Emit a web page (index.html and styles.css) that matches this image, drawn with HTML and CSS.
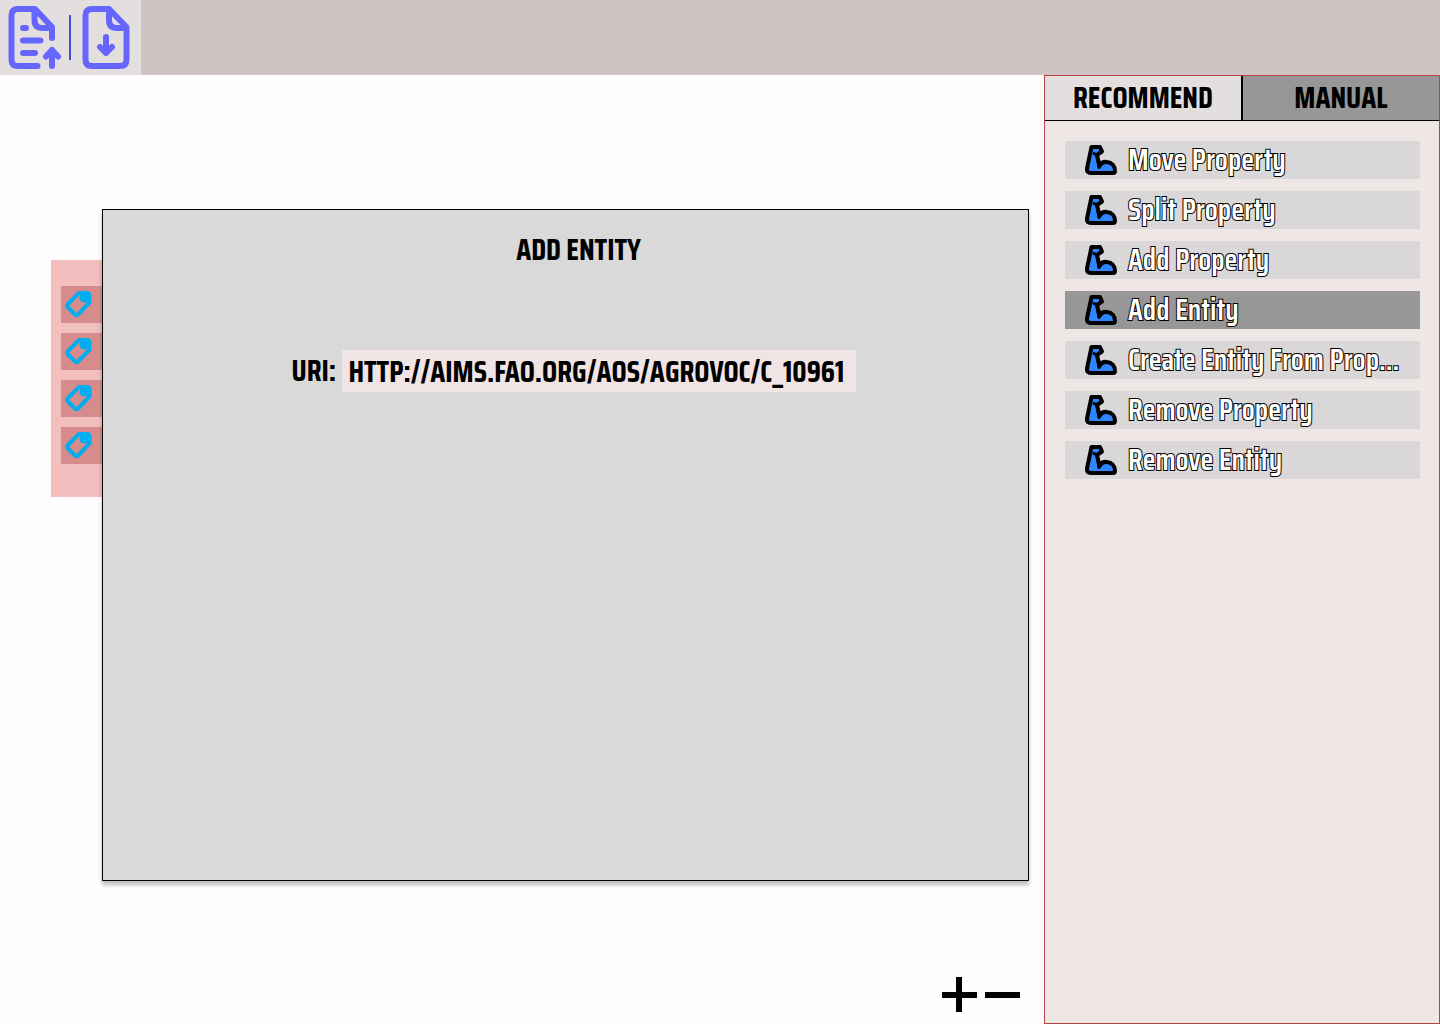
FILE: index.html
```html
<!DOCTYPE html>
<html lang="en">
<head>
<meta charset="utf-8">
<title>Entity editor</title>
<link rel="stylesheet" href="styles.css">
</head>
<body>
<svg class="sprite" aria-hidden="true">
  <symbol id="tag" viewBox="0 1 28 28">
    <path d="M15 3H22.500Q25.500 3 25.500 6V12.500L14 24.500Q12.500 26 11 24.500L4 17.500Q2.500 16 4 14Z" fill="none" stroke="#00aeef" stroke-width="4" stroke-linejoin="round"/>
    <circle cx="20" cy="8" r="4.500" fill="#00aeef"/>
  </symbol>
  <symbol id="arm" viewBox="0 0 32 30">
    <path d="M6.500 2H15L17 6.500L12 10L14.500 21C16 18 19 16.500 22 17C27 17.500 30 21 30 26Q30 28 28 28H6Q1.500 28 2 23.500Z" fill="#2e86ff" stroke="#000" stroke-width="4" stroke-linejoin="round"/>
    <path d="M9 8.500L12 10L14 22.500" fill="none" stroke="#000" stroke-width="3" stroke-linecap="round" stroke-linejoin="round"/>
  </symbol>
</svg>
<header class="topbar">
  <div class="toolbar">
    <button class="tool" aria-label="Upload document">
      <svg viewBox="4 0 60 75" class="tool-icon"><path d="M37.500 66H18Q11.500 66 11.500 59.500V15.500Q11.500 9 18 9H35L52 27V38M34.500 9V20Q34.500 28 42.500 28H52M23 28H26M23 40.500H40.500M23 53H35M52 66V50M46 56.500L52 50L58 56.500"/></svg>
    </button>
    <span class="divider"></span>
    <button class="tool" aria-label="Download document">
      <svg viewBox="76 0 60 75" class="tool-icon"><path d="M109 9H92Q85.500 9 85.500 15.500V59.500Q85.500 66 92 66H120Q126.500 66 126.500 59.500V27ZV20Q109 28 117 28H126.500M106 37V53M100 47L106 53L112 47"/></svg>
    </button>
  </div>
</header>
<div class="main">
  <main class="canvas">
    <div class="node">
      <div class="prop"><svg class="tag"><use href="#tag"/></svg></div>
      <div class="prop"><svg class="tag"><use href="#tag"/></svg></div>
      <div class="prop"><svg class="tag"><use href="#tag"/></svg></div>
      <div class="prop"><svg class="tag"><use href="#tag"/></svg></div>
    </div>
    <section class="dialog" role="dialog" aria-labelledby="dialog-title">
      <h1 class="dialog-title" id="dialog-title">ADD ENTITY</h1>
      <div class="field">
        <label class="field-label" for="uri">URI:</label>
        <input class="field-input" id="uri" type="text" value="HTTP://AIMS.FAO.ORG/AOS/AGROVOC/C_10961">
      </div>
    </section>
    <div class="zoom">
      <button class="zoom-button" aria-label="Zoom in"><svg class="zoom-icon" viewBox="0 0 35 35"><path d="M0 18H35M17 0V35"/></svg></button>
      <button class="zoom-button" aria-label="Zoom out"><svg class="zoom-icon" viewBox="0 0 35 35"><path d="M0 18H35"/></svg></button>
    </div>
  </main>
  <aside class="panel">
    <div class="tabs" role="tablist">
      <button class="tab" role="tab" aria-selected="true">RECOMMEND</button>
      <button class="tab tab-inactive" role="tab" aria-selected="false">MANUAL</button>
    </div>
    <div class="actions">
      <button class="action"><svg class="arm"><use href="#arm"/></svg><span class="action-name">Move Property</span></button>
      <button class="action"><svg class="arm"><use href="#arm"/></svg><span class="action-name">Split Property</span></button>
      <button class="action"><svg class="arm"><use href="#arm"/></svg><span class="action-name">Add Property</span></button>
      <button class="action action-selected"><svg class="arm"><use href="#arm"/></svg><span class="action-name">Add Entity</span></button>
      <button class="action"><svg class="arm"><use href="#arm"/></svg><span class="action-name">Create Entity From Prop...</span></button>
      <button class="action"><svg class="arm"><use href="#arm"/></svg><span class="action-name">Remove Property</span></button>
      <button class="action"><svg class="arm"><use href="#arm"/></svg><span class="action-name">Remove Entity</span></button>
    </div>
  </aside>
</div>
</body>
</html>
```
FILE: styles.css
```css
* { box-sizing: border-box; }
body {
  margin: 0;
  min-height: 100vh;
  display: flex;
  flex-direction: column;
  background: #fffdfe;
  color: #000;
  font: bold 30px/40px "Saira Condensed", "Saira ExtraCondensed", "Liberation Sans Narrow", "DejaVu Sans Condensed", sans-serif;
}
button, input { font: inherit; color: inherit; border: 0; padding: 0; margin: 0; background: none; border-radius: 0; }
button { cursor: pointer; }
svg { display: block; flex: none; }
.sprite { position: absolute; width: 0; height: 0; }

.topbar { display: flex; height: 75px; background: #cec4c4; }
.toolbar { display: flex; align-items: center; gap: 5px; padding: 0 5px 0 4px; background: #e4dfdf; }
.tool-icon { width: 60px; height: 75px; fill: none; stroke: #6666ff; stroke-width: 6; stroke-linecap: round; stroke-linejoin: round; }
.divider { width: 2px; height: 45px; background: #4848d0; }

.main { flex: 1; display: flex; }
.canvas { flex: 1; min-width: 0; position: relative; }
.node {
  position: absolute; left: 51px; top: 185px; width: 120px;
  display: flex; flex-direction: column; gap: 10px;
  padding: 26px 10px 33px; background: #f2bebe;
}
.prop { display: flex; align-items: center; height: 37px; padding-left: 3px; background: #d68c8c; }
.tag { width: 28px; height: 28px; }
.dialog {
  position: absolute; top: 134px; right: 15px; bottom: 143px; left: 102px;
  padding: 20px 0 0 26px;
  background: #d9d9d9; border: 1px solid #000; box-shadow: 0 4px 4px rgba(0, 0, 0, .25);
}
.dialog-title { margin: 0; font-size: inherit; text-align: center; }
.field { display: flex; align-items: center; justify-content: center; margin-top: 80px; padding-right: 10px; }
.field-label { width: 50px; }
.field-input { width: 514px; height: 42px; padding: 0 7px; background: #f0e4e4; }
.zoom { position: absolute; right: 24px; bottom: 12px; display: flex; gap: 8px; }
.zoom-icon { width: 35px; height: 35px; stroke: #000; stroke-width: 6; }

.panel { width: 396px; background: #efe6e6; border: 1px solid #b94343; }
.tabs { display: flex; height: 45px; border-bottom: 1px solid #000; }
.tab { flex: 1; background: #e4dfdf; }
.tab-inactive { background: #979797; border-left: 2px solid #000; }
.actions { display: flex; flex-direction: column; gap: 12px; padding: 20px 19px 20px 20px; }
.action {
  display: flex; align-items: center; gap: 11px; height: 38px; padding-left: 20px;
  background: #d9d7d8; color: #fff; white-space: nowrap;
}
.action-selected { background: #979797; }
.action-name { font-weight: 600; -webkit-text-stroke: 2px #000; paint-order: stroke fill; }
.arm { width: 32px; height: 30px; }
```
